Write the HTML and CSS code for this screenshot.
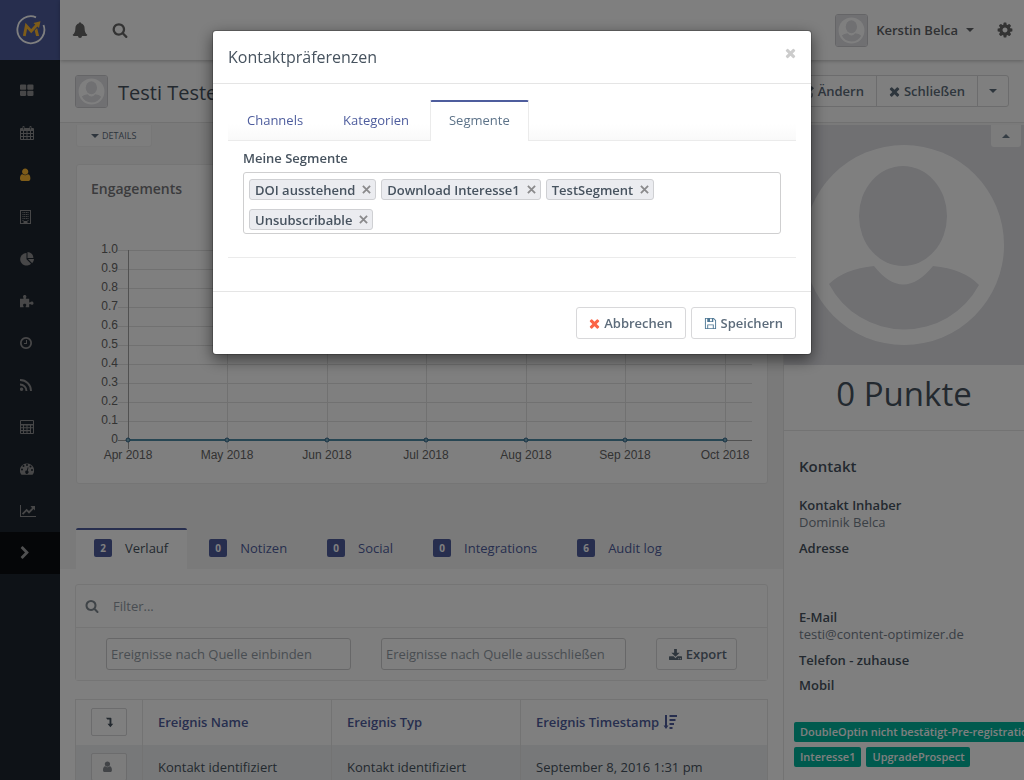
FILE: index.html
```
<!DOCTYPE html>
<html lang="de">
<head>
<meta charset="utf-8">
<meta name="viewport" content="width=device-width, initial-scale=1">
<title>Testi Tester – Kontaktpräferenzen</title>
<link rel="stylesheet" href="styles.css">
</head>
<body>
<svg class="sprite" aria-hidden="true">
  <symbol id="times" viewBox="200 200 1392 1392"><path d="M1490 1322q0 40-28 68l-136 136q-28 28-68 28t-68-28l-294-294-294 294q-28 28-68 28t-68-28l-136-136q-28-28-28-68t28-68l294-294-294-294q-28-28-28-68t28-68l136-136q28-28 68-28t68 28l294 294 294-294q28-28 68-28t68 28l136 136q28 28 28 68t-28 68l-294 294 294 294q28 28 28 68z"/></symbol>
  <symbol id="search" viewBox="0 0 1792 1792"><path d="M1216 832q0-185-131.5-316.5t-316.5-131.5-316.5 131.5-131.5 316.5 131.5 316.5 316.5 131.5 316.5-131.5 131.5-316.5zm512 832q0 52-38 90t-90 38q-54 0-90-38l-343-342q-179 124-399 124-143 0-273.5-55.5t-225-150-150-225-55.5-273.5 55.5-273.5 150-225 225-150 273.5-55.5 273.5 55.5 225 150 150 225 55.5 273.5q0 220-124 399l343 343q37 37 37 90z"/></symbol>
  <symbol id="bell" viewBox="0 0 16 16"><path d="M7 1.3a1 1 0 0 1 2 0C11.500 2 12.600 4 12.600 6.300c0 3.200 1 5.200 2.700 6.500 0 .7-.5 1.200-1.200 1.200H10a2 2 0 0 1-4 0H1.900C1.200 14 .7 13.500.7 12.800c1.700-1.300 2.700-3.300 2.700-6.500C3.400 4 4.500 2 7 1.300z"/></symbol>
  <symbol id="grid" viewBox="64 64 1728 1728"><path d="M832 1024v384q0 52-38 90t-90 38h-512q-52 0-90-38t-38-90v-384q0-52 38-90t90-38h512q52 0 90 38t38 90zm0-768v384q0 52-38 90t-90 38h-512q-52 0-90-38t-38-90v-384q0-52 38-90t90-38h512q52 0 90 38t38 90zm896 768v384q0 52-38 90t-90 38h-512q-52 0-90-38t-38-90v-384q0-52 38-90t90-38h512q52 0 90 38t38 90zm0-768v384q0 52-38 90t-90 38h-512q-52 0-90-38t-38-90v-384q0-52 38-90t90-38h512q52 0 90 38t38 90z"/></symbol>
  <symbol id="calendar" viewBox="0 0 14 14"><path fill-rule="evenodd" d="M1 2h1.500V.8Q2.500 0 3.500 0t1 .8V2h5V.8Q9.500 0 10.500 0t1 .8V2H13q1 0 1 1v10q0 1-1 1H1q-1 0-1-1V3q0-1 1-1zM1 5v2h2V5zm3 0v2h2.500V5zm3.500 0v2H10V5zM11 5v2h2V5zM1 8v2h2V8zm3 0v2h2.500V8zm3.500 0v2H10V8zM11 8v2h2V8zM1 11v2h2v-2zm3 0v2h2.500v-2zm3.500 0v2H10v-2zm3.500 0v2h2v-2zM3.200 1v2.500h.6V1zm7 0v2.500h.6V1z"/></symbol>
  <symbol id="user" viewBox="256 64 1728 1728"><path d="M1536 1399q0 109-62.500 187t-150.500 78h-854q-88 0-150.500-78t-62.500-187q0-85 8.500-160.500t31.500-152 58.500-131 94-89 134.500-34.500q131 128 313 128t313-128q76 0 134.500 34.500t94 89 58.500 131 31.500 152 8.500 160.500zm-256-887q0 159-112.500 271.500t-271.500 112.500-271.500-112.500-112.500-271.500 112.500-271.500 271.500-112.500 271.500 112.500 112.500 271.500z"/></symbol>
  <symbol id="building" viewBox="1.500 0 14 14"><path fill-rule="evenodd" d="M1.500 0h11v14h-11zM2.500 1v12H5v-2h4v2h2.500V1z"/><path d="M4 2h1v1H4zm1.700 0h1v1h-1zm1.700 0h1v1h-1zM9 2h1v1H9zM4 4h1v1H4zm1.700 0h1v1h-1zm1.700 0h1v1h-1zM9 4h1v1H9zM4 6h1v1H4zm1.700 0h1v1h-1zm1.700 0h1v1h-1zM9 6h1v1H9zM4 8h1v1H4zm1.700 0h1v1h-1zm1.700 0h1v1h-1zM9 8h1v1H9zM4 10h1v1H4zm5 0h1v1H9z"/></symbol>
  <symbol id="pie" viewBox="0 0 14 14"><path d="M6.500 1v6.300l4.500 4.400A6.300 6.300 0 1 1 6.500 1zM7.500 0A6 6 0 0 1 13.400 6H7.500zM8 7h6a6 6 0 0 1-1.800 4.200z"/></symbol>
  <symbol id="puzzle" viewBox="0 0 14 14"><path d="M0 4.700c1.500.2 3.300.3 3.600-.2.200-.5-.6-1-.6-2C3 1.500 3.800.9 4.700.9s1.700.6 1.700 1.600c0 1-.8 1.400-.6 2 .2.500 2 .4 3.400.2v3c0 .8.500 1 1 .6.400-.4.900-.7 1.600-.7 1 0 1.700.7 1.700 1.600 0 1-.7 1.600-1.700 1.600-.7 0-1.200-.4-1.600-.7-.5-.4-1-.1-1 .6v2.600H5.700c-.2-1 .6-1.300.6-2.200 0-.8-.6-1.400-1.600-1.400S3 10.300 3 11.100c0 .9.800 1.200.6 2.200H0z"/></symbol>
  <symbol id="clock" viewBox="128 0 1792 1792"><path d="M1024 544v448q0 14-9 23t-23 9h-320q-14 0-23-9t-9-23v-64q0-14 9-23t23-9h224v-352q0-14 9-23t23-9h64q14 0 23 9t9 23zm416 352q0-148-73-273t-198-198-273-73-273 73-198 198-73 273 73 273 198 198 273 73 273-73 198-198 73-273zm224 0q0 209-103 385.500t-279.500 279.500-385.500 103-385.500-103-279.500-279.500-103-385.500 103-385.500 279.500-279.500 385.500-103 385.500 103 279.500 279.500 103 385.500z"/></symbol>
  <symbol id="rss" viewBox="1.500 .5 13 13"><circle cx="3" cy="11" r="1.600"/><path d="M1.500 6.500a6 6 0 0 1 6 6M1.500 2.400a10 10 0 0 1 10.200 10.100" fill="none" stroke="currentColor" stroke-width="1.800"/></symbol>
  <symbol id="calculator" viewBox="0 0 14 14"><path fill-rule="evenodd" d="M1 0h12q1 0 1 1v12q0 1-1 1H1q-1 0-1-1V1q0-1 1-1zM1 1v3h12V1zM1 5.500v1.800h2V5.500zm3 0v1.800h2.500V5.500zm3.500 0v1.800H10V5.500zm3.500 0v1.800h2V5.500zM1 8.300v1.800h2V8.300zm3 0v1.800h2.500V8.300zm3.500 0v1.800H10V8.300zM1 11.200V13h2v-1.800zm3 0V13h2.500v-1.800zm3.500 0V13H10v-1.800zM11 8.300V13h2V8.300z"/></symbol>
  <symbol id="gauge" viewBox="0 0 14 14"><path fill-rule="evenodd" d="M7 1.500a7 7 0 0 1 6 10.800q-.2.400-.7.400H1.700q-.5 0-.7-.4A7 7 0 0 1 7 1.500zM3 7.500a1 1 0 1 0-2 0 1 1 0 0 0 2 0zM4.500 4a1 1 0 1 0-2 .0 1 1 0 0 0 2 0zM8 3a1 1 0 1 0-2 0 1 1 0 0 0 2 0zm3.500 1.500a1 1 0 1 0-2 0 1 1 0 0 0 2 0zM13 8a1 1 0 1 0-2 0 1 1 0 0 0 2 0zM7.700 5.200l-.9 3.300a1.600 1.600 0 1 0 1 .3l.7-3.300z"/></symbol>
  <symbol id="trend" viewBox="0 0 16 14"><path d="M0 1h1v11h15v1H0z"/><path d="M10.500 2H15v4.500l-1.400-1.400-4.600 4.600L6.600 7.300l-3.400 3.400-1.300-1.300 4.700-4.700L9 7.100l3-3z"/></symbol>
  <symbol id="chevron" viewBox="256 0 1792 1792"><path d="M1363 877l-742 742q-19 19-45 19t-45-19l-166-166q-19-19-19-45t19-45l531-531-531-531q-19-19-19-45t19-45l166-166q19-19 45-19t45 19l742 742q19 19 19 45t-19 45z"/></symbol>
  <symbol id="cog" viewBox="64 64 1664 1664"><path d="M1152 896q0-106-75-181t-181-75-181 75-75 181 75 181 181 75 181-75 75-181zm512-109v222q0 12-8 23t-20 13l-185 28q-19 54-39 91 35 50 107 138 10 12 10 25t-9 23q-27 37-99 108t-94 71q-12 0-26-9l-138-108q-44 23-91 38-16 136-29 186-7 28-36 28h-222q-14 0-24.500-8.500t-11.500-21.500l-28-184q-49-16-90-37l-141 107q-10 9-25 9-14 0-25-11-126-114-165-168-7-10-7-23 0-12 8-23 15-21 51-66.500t54-70.500q-27-50-41-99l-183-27q-13-2-21-12.500t-8-23.500v-222q0-12 8-23t19-13l186-28q14-46 39-92-40-57-107-138-10-12-10-24 0-10 9-23 26-36 98.500-107.500t94.500-71.500q13 0 26 10l138 107q44-23 91-38 16-136 29-186 7-28 36-28h222q14 0 24.500 8.500t11.500 21.500l28 184q49 16 90 37l142-107q9-9 24-9 13 0 25 10 129 119 165 170 7 8 7 22 0 12-8 23-15 21-51 66.500t-54 70.500q26 50 41 98l183 28q13 2 21 12.500t8 23.500z"/></symbol>
  <symbol id="edit" viewBox="0 0 14 14"><path d="M9 2H2.500Q1 2 1 3.500v8Q1 13 2.500 13h8q1.500 0 1.500-1.500V9" fill="none" stroke="currentColor" stroke-width="1.200"/><path d="M5 7.500L11.500 1 14 3.500 7.500 10H5z"/></symbol>
  <symbol id="save" viewBox="0 0 14 14"><path fill-rule="evenodd" d="M1 1h9.500L13 3.500V13H1zM2 2v10h1.500V8h7v4H12V4l-2-2v3.500H3.500V2zm4.500 0v2.500h2V2zM4.500 9v3h5V9z"/></symbol>
  <symbol id="download" viewBox="0 0 14 14"><path d="M5.500 1h3v4h3L7 9.500 2.500 5h3z"/><path fill-rule="evenodd" d="M.5 9H5l2 2 2-2h4.500q.5 0 .5.500v3q0 .5-.5.500H.5q-.5 0-.5-.5v-3Q0 9 .5 9zM10 11v1h1v-1zm2 0v1h1v-1z"/></symbol>
  <symbol id="level-down" viewBox="0 0 14 14"><path d="M3.500 2H9q.8 0 .8.800V9h2.200L8.600 13 5.200 9h2.400V4H5z"/></symbol>
  <symbol id="sort" viewBox="0 0 14 14"><path d="M2 0h2v10.500h1.500L3 14 .5 10.500H2zM6.500 0H14v2H6.500zm0 4h6v2h-6zm0 4H11v2H6.500zm0 4h3v2h-3z"/></symbol>
  <symbol id="avatar" viewBox="0 0 240 240"><path d="M0 0h240v240H0z" fill="#e0e0e5"/><circle cx="120" cy="120" r="100" fill="#fff"/><ellipse cx="119" cy="91" rx="44" ry="50" fill="#e0e0e5"/><path d="M45 159Q60 144 90 141Q119 178 149 141Q180 144 195 160A85 85 0 0 1 45 159z" fill="#e0e0e5"/></symbol>
</svg>

<div class="app">
  <nav class="sidebar" aria-label="Hauptmenü">
    <a class="logo" href="#" aria-label="Startseite">
      <svg viewBox="0 0 30 30"><path d="M20 2.300A13.500 13.500 0 1 0 27.500 10" fill="none" stroke="#fff" stroke-width="1.800"/><path d="M8.300 21L10.300 10.800l4.900 5.400 5.600-6.200" fill="none" stroke="#fdb933" stroke-width="2.800"/><path d="M17.500 8L24.500 6.200 23 13zM18.700 15.500l2.400-2.500 2 8h-3z" fill="#fdb933"/></svg>
    </a>
    <a class="side-link side-first" href="#" aria-label="Dashboard"><svg><use href="#grid"/></svg></a>
    <a class="side-link" href="#" aria-label="Kalender"><svg><use href="#calendar"/></svg></a>
    <a class="side-link active" href="#" aria-label="Kontakte"><svg><use href="#user"/></svg></a>
    <a class="side-link" href="#" aria-label="Unternehmen"><svg><use href="#building"/></svg></a>
    <a class="side-link" href="#" aria-label="Segmente"><svg><use href="#pie"/></svg></a>
    <a class="side-link" href="#" aria-label="Komponenten"><svg><use href="#puzzle"/></svg></a>
    <a class="side-link" href="#" aria-label="Kampagnen"><svg><use href="#clock"/></svg></a>
    <a class="side-link" href="#" aria-label="Kanäle"><svg><use href="#rss"/></svg></a>
    <a class="side-link" href="#" aria-label="Punkte"><svg><use href="#calculator"/></svg></a>
    <a class="side-link" href="#" aria-label="Phasen"><svg><use href="#gauge"/></svg></a>
    <a class="side-link" href="#" aria-label="Berichte"><svg class="wide"><use href="#trend"/></svg></a>
    <button class="side-link side-toggle" type="button" aria-label="Menü ausklappen"><svg><use href="#chevron"/></svg></button>
  </nav>

  <div class="page">
    <header class="topbar">
      <button class="icon-button" type="button" aria-label="Benachrichtigungen"><svg><use href="#bell"/></svg></button>
      <button class="icon-button" type="button" aria-label="Suche"><svg><use href="#search"/></svg></button>
      <a class="account" href="#"><svg class="avatar"><use href="#avatar"/></svg><span>Kerstin Belca</span><i class="caret"></i></a>
      <button class="icon-button" type="button" aria-label="Einstellungen"><svg><use href="#cog"/></svg></button>
    </header>

    <div class="page-head">
      <svg class="avatar"><use href="#avatar"/></svg>
      <h1>Testi Tester</h1>
      <div class="button-group">
        <button class="btn" type="button"><svg><use href="#edit"/></svg>Ändern</button>
        <button class="btn btn-times" type="button"><svg><use href="#times"/></svg>Schließen</button>
        <button class="btn btn-caret" type="button" aria-label="Weitere Aktionen"><i class="caret"></i></button>
      </div>
    </div>

    <div class="columns">
      <main class="main">
        <section class="overview">
          <button class="details" type="button"><i class="caret"></i>DETAILS</button>
          <div class="panel chart-panel">
            <h2>Engagements</h2>
            <svg class="chart" viewBox="0 0 662 228" role="img" aria-label="Engagements April bis Oktober 2018">
              <path class="grid-line" d="M27 10.500H661M27 29.500H661M27 48.500H661M27 67.500H661M27 86.500H661M27 105.500H661M27 124.500H661M27 143.500H661M27 162.500H661M27 181.500H661M136.500 10V209M236.500 10V209M335.500 10V209M435.500 10V209M534.500 10V209M634.500 10V209"/>
              <path class="axis-line" d="M37.500 10V209M27 200.500H661"/>
              <path class="data-line" d="M37 200H634"/>
              <g class="points"><circle cx="37" cy="200" r="2"/><circle cx="136" cy="200" r="2"/><circle cx="236" cy="200" r="2"/><circle cx="335" cy="200" r="2"/><circle cx="435" cy="200" r="2"/><circle cx="534" cy="200" r="2"/><circle cx="634" cy="200" r="2"/></g>
              <g class="y-labels"><text x="27" y="13">1.0</text><text x="27" y="32">0.9</text><text x="27" y="51">0.8</text><text x="27" y="70">0.7</text><text x="27" y="89">0.6</text><text x="27" y="108">0.5</text><text x="27" y="127">0.4</text><text x="27" y="146">0.3</text><text x="27" y="165">0.2</text><text x="27" y="184">0.1</text><text x="27" y="203">0</text></g>
              <g class="x-labels"><text x="37" y="219">Apr 2018</text><text x="136" y="219">May 2018</text><text x="236" y="219">Jun 2018</text><text x="335" y="219">Jul 2018</text><text x="435" y="219">Aug 2018</text><text x="534" y="219">Sep 2018</text><text x="634" y="219">Oct 2018</text></g>
            </svg>
          </div>
          <nav class="record-tabs" aria-label="Kontaktdaten">
            <a class="current" href="#"><span class="count">2</span>Verlauf</a>
            <a href="#"><span class="count">0</span>Notizen</a>
            <a href="#"><span class="count">0</span>Social</a>
            <a href="#"><span class="count">0</span>Integrations</a>
            <a href="#"><span class="count">6</span>Audit log</a>
          </nav>
        </section>

        <section class="history">
          <form class="panel filter">
            <div class="filter-search"><svg><use href="#search"/></svg><input type="text" placeholder="Filter..." aria-label="Filter"></div>
            <div class="filter-row">
              <input type="text" placeholder="Ereignisse nach Quelle einbinden" aria-label="Ereignisse nach Quelle einbinden">
              <input type="text" placeholder="Ereignisse nach Quelle ausschließen" aria-label="Ereignisse nach Quelle ausschließen">
              <button class="btn btn-export" type="button"><svg><use href="#download"/></svg>Export</button>
            </div>
          </form>
          <table class="events">
            <thead><tr>
              <th class="col-icon"><button class="mini" type="button" aria-label="Alle Details umschalten"><svg><use href="#level-down"/></svg></button></th>
              <th class="col-mid"><a href="#">Ereignis Name</a></th>
              <th class="col-mid"><a href="#">Ereignis Typ</a></th>
              <th><a href="#">Ereignis Timestamp <svg><use href="#sort"/></svg></a></th>
            </tr></thead>
            <tbody><tr>
              <td><button class="mini muted" type="button" aria-label="Details"><svg><use href="#user"/></svg></button></td>
              <td>Kontakt identifiziert</td><td>Kontakt identifiziert</td><td>September 8, 2016 1:31 pm</td>
            </tr></tbody>
          </table>
        </section>
      </main>

      <aside class="profile">
        <div class="portrait"><svg viewBox="0 0 240 240"><use href="#avatar"/></svg><button class="collapse" type="button" aria-label="Bild einklappen"><i class="caret caret-up"></i></button></div>
        <div class="points-total">0 Punkte</div>
        <div class="contact">
          <h3>Kontakt</h3>
          <dl>
            <dt>Kontakt Inhaber</dt><dd>Dominik Belca</dd>
            <dt>Adresse</dt><dd class="address"></dd>
            <dt>E-Mail</dt><dd>testi@content-optimizer.de</dd>
            <dt>Telefon - zuhause</dt><dd></dd>
            <dt>Mobil</dt><dd></dd>
          </dl>
        </div>
        <div class="tags"><span>DoubleOptin nicht bestätigt-Pre-registration</span><span>Interesse1</span><span>UpgradeProspect</span></div>
      </aside>
    </div>
  </div>
</div>

<div class="backdrop">
  <div class="modal" role="dialog" aria-modal="true" aria-labelledby="modal-title">
    <header class="modal-head">
      <h4 id="modal-title">Kontaktpräferenzen</h4>
      <button class="close" type="button" aria-label="Dialog ausblenden"><svg><use href="#times"/></svg></button>
    </header>
    <div class="modal-body">
      <nav class="modal-tabs" aria-label="Präferenzen">
        <a href="#">Channels</a><a href="#">Kategorien</a><a class="current" href="#">Segmente</a>
      </nav>
      <div class="field">
        <label for="segments">Meine Segmente</label>
        <div class="chips">
          <span class="chip">DOI ausstehend<button type="button" aria-label="DOI ausstehend entfernen"><svg viewBox="0 0 10 10"><path d="M1 1l8 8M9 1L1 9"/></svg></button></span>
          <span class="chip">Download Interesse1<button type="button" aria-label="Download Interesse1 entfernen"><svg viewBox="0 0 10 10"><path d="M1 1l8 8M9 1L1 9"/></svg></button></span>
          <span class="chip">TestSegment<button type="button" aria-label="TestSegment entfernen"><svg viewBox="0 0 10 10"><path d="M1 1l8 8M9 1L1 9"/></svg></button></span>
          <span class="chip">Unsubscribable<button type="button" aria-label="Unsubscribable entfernen"><svg viewBox="0 0 10 10"><path d="M1 1l8 8M9 1L1 9"/></svg></button></span>
          <input id="segments" type="text">
        </div>
      </div>
    </div>
    <footer class="modal-foot">
      <button class="btn btn-times cancel" type="button"><svg><use href="#times"/></svg>Abbrechen</button>
      <button class="btn save" type="button"><svg><use href="#save"/></svg>Speichern</button>
    </footer>
  </div>
</div>
</body>
</html>
```
FILE: styles.css
```
* { box-sizing: border-box; }
body {
  margin: 0;
  font: 13px/18px "Open Sans", "Noto Sans", sans-serif;
  color: #47535f;
  background: #fff;
  overflow: hidden;
}
h1, h2, h3, h4, dl, dd { margin: 0; }
a { color: #4e5d9d; text-decoration: none; }
button, input { font: inherit; color: inherit; }
button { padding: 0; border: 0; background: none; cursor: pointer; }
svg { width: 14px; height: 14px; fill: currentColor; flex: none; }
.sprite { position: absolute; width: 0; height: 0; }
.caret {
  display: inline-block;
  border: 4px solid transparent;
  border-top-color: currentColor;
  border-bottom: 0;
}
.caret-up { border-top: 0; border-bottom: 4px solid currentColor; }

.app { display: flex; height: 100vh; overflow: hidden; }
.sidebar { flex: none; width: 60px; background: #1d252e; color: #8e8e90; }
.logo {
  display: flex;
  align-items: center;
  justify-content: center;
  height: 60px;
  padding-left: 2px;
  background: #4e5d9d;
}
.logo svg { width: 30px; height: 30px; }
.side-link {
  display: flex;
  align-items: center;
  width: 100%;
  height: 42px;
  padding-left: 20px;
  color: inherit;
}
.side-link .wide { width: 16px; }
.side-link.active { color: #fdb933; }
.side-first { margin-top: 10px; }
.side-toggle { background: #0b0d10; color: #a0a0a2; }
.page { flex: 1; min-width: 0; display: flex; flex-direction: column; }

.topbar {
  position: relative;
  display: flex;
  align-items: center;
  height: 60px;
  padding: 0 11px 0 12px;
  color: #666;
  box-shadow: 0 1px 4px rgba(0, 0, 0, .25);
}
.icon-button { display: flex; width: 16px; margin-right: 24px; }
.icon-button svg { width: 16px; height: 16px; }
.icon-button:last-child { margin: 0 0 0 23px; }
.account { display: flex; align-items: center; gap: 8px; margin-left: auto; color: #606266; font-weight: 600; }
.avatar { width: 33px; height: 33px; border: 1px solid #cacace; border-radius: 3px; }
.page-head {
  display: flex;
  align-items: center;
  height: 63px;
  padding: 0 15px;
  background: #fdfdfd;
  border-bottom: 1px solid #e2e2e2;
}
.page-head h1 { margin-left: 10px; padding-top: 3px; font-size: 20px; line-height: 28px; font-weight: 400; }
.button-group { display: flex; margin-left: auto; }
.btn {
  display: flex;
  align-items: center;
  gap: 4px;
  height: 32px;
  padding: 0 12px;
  border: 1px solid #d8d8da;
  border-radius: 3px;
  background: #fff;
  color: #5d6c7b;
  font-weight: 600;
}
.btn svg { width: 13px; height: 13px; }
.btn-times svg { width: 11px; height: 11px; }
.btn-export { padding: 0 9px 0 12px; }
.button-group .btn { margin-left: -1px; border-radius: 0; }
.button-group .btn:last-child { border-radius: 0 3px 3px 0; }
.button-group .btn-caret { padding: 0 11px; }

.columns {
  flex: 1;
  min-height: 0;
  display: grid;
  grid-template-columns: minmax(0, 1fr) 240px;
  border-top: 2px solid #f5f5f5;
}
.main { min-width: 0; border-right: 1px solid #e6e6e6; }
.overview { padding: 0 15px 0 16px; background: #f5f5f5; }
.details {
  display: flex;
  align-items: center;
  gap: 3px;
  height: 22px;
  padding: 0 15px 0 14px;
  border: 1px solid #eee;
  border-top: 0;
  border-radius: 0 0 3px 3px;
  background: #fafafa;
  font-size: 9px;
  color: #5c6b7a;
}
.panel { border: 1px solid #ebebeb; border-radius: 3px; background: #fff; }
.chart-panel { margin-top: 17px; padding: 14px; height: 320px; }
.chart-panel h2 { font-size: 14px; line-height: 20px; font-weight: 600; color: #77777a; }
.chart { display: block; width: 100%; height: auto; margin-top: 41px; }
.chart text { font: 12px "Liberation Sans", Arial, sans-serif; fill: #666; }
.y-labels { text-anchor: end; }
.x-labels { text-anchor: middle; }
.grid-line { stroke: #e2e2e2; fill: none; }
.axis-line { stroke: #a2a2a2; fill: none; }
.data-line { stroke: #4e8ca6; stroke-width: 2; fill: none; }
.points { fill: #7fb0c5; stroke: #35688a; stroke-width: 1; }
.record-tabs { display: flex; margin-top: 44px; }
.record-tabs a {
  display: flex;
  align-items: center;
  gap: 13px;
  height: 41px;
  padding: 0 18px 3px;
  border-top: 2px solid transparent;
}
.record-tabs a + a { padding-left: 22px; }
.record-tabs .current { padding-right: 19px; border-top-color: #4e5d9d; border-radius: 2px 2px 0 0; background: #fff; color: #47535f; }
.count {
  width: 18px;
  border-radius: 2px;
  background: #4e5d9d;
  color: #fff;
  font-size: 10px;
  font-weight: 700;
  text-align: center;
}
.history { padding: 15px 15px 0; }
input::placeholder { color: #929ba4; opacity: 1; }
.filter-search { display: flex; align-items: center; gap: 14px; height: 43px; padding: 0 9px; border-bottom: 1px solid #ebebeb; }
.filter-search svg { color: #7f8890; }
.filter-search input { flex: 1; padding: 0; border: 0; background: none; }
.filter-row { display: flex; gap: 30px; padding: 10px 30px; background: #fdfdfd; }
.filter-row input { flex: 1; min-width: 0; height: 32px; padding: 0 4px; border: 1px solid #cfcfd0; border-radius: 3px; background: #fff; }
.events { width: 100%; margin-top: 18px; border-collapse: collapse; table-layout: fixed; border: 1px solid #e6e6e6; }
.events th, .events td { height: 45px; padding: 0 15px; border-left: 1px solid #e6e6e6; text-align: left; }
.events th { font-weight: 600; }
.events th svg { vertical-align: -2px; }
.events .col-icon { width: 67px; }
.events .col-mid { width: 189px; }
.events tbody { background: #eef0f2; }
.mini { display: flex; align-items: center; justify-content: center; width: 36px; height: 28px; border: 1px solid #d8d8da; border-radius: 2px; background: #fff; }
.mini svg { width: 12px; height: 12px; }
.muted { color: #84898e; background: #f8f8f9; }

.profile { min-width: 0; overflow: hidden; }
.portrait { position: relative; }
.portrait > svg { display: block; width: 100%; height: auto; }
.collapse {
  position: absolute;
  top: 0;
  right: 3px;
  display: flex;
  align-items: center;
  justify-content: center;
  width: 30px;
  height: 22px;
  background: #f8f8f8;
  color: #6b7a88;
  border-radius: 0 0 3px 3px;
}
.points-total { padding: 5px 0 12px; border-bottom: 1px solid #e6e6e6; font-size: 33px; line-height: 48px; text-align: center; }
.contact { padding: 25px 15px 0; }
.contact h3 { margin-bottom: 21px; font-size: 15px; line-height: 20px; font-weight: 600; }
.contact dl { line-height: 17px; }
.contact dt { font-weight: 600; }
.contact dd { margin-bottom: 8px; color: #75808b; }
.contact dd:not(:empty) { margin-bottom: 9px; }
.contact .address { height: 44px; }
.tags { display: flex; flex-wrap: wrap; gap: 5px; padding: 20px 0 0 10px; }
.tags span { padding: 1px 6px; border-radius: 2px; background: #00b49c; color: #fff; font-size: 11px; font-weight: 600; white-space: nowrap; }

.backdrop { position: fixed; inset: 0; padding: 30px 15px; background: rgba(0, 0, 0, .5); overflow: auto; }
.modal {
  max-width: 600px;
  margin: 0 auto;
  border: 1px solid rgba(0, 0, 0, .2);
  border-radius: 4px;
  background: #fff;
  background-clip: padding-box;
  box-shadow: 0 5px 15px rgba(0, 0, 0, .5);
}
.modal-head { display: flex; justify-content: space-between; padding: 15px; border-bottom: 1px solid #e5e5e5; }
.modal-head h4 { font-size: 16px; line-height: 22px; font-weight: 400; }
.close { display: flex; height: 14px; color: #ccc; }
.close svg { width: 11px; height: 14px; }
.modal-body { padding: 16px 15px 33px; }
.modal-tabs { display: flex; border-bottom: 1px solid #ebebeb; background: linear-gradient(#fff 60%, #f9f9f9); }
.modal-tabs a { height: 40px; padding: 11px 21px 0 19px; }
.modal-tabs .current {
  height: 41px;
  margin-bottom: -1px;
  padding: 9px 18px 0;
  border: 1px solid #ebebeb;
  border-top: 2px solid #4e5d9d;
  border-bottom: 0;
  border-radius: 2px 2px 0 0;
  background: #fff;
  color: #5d7389;
}
.field { padding: 8px 15px 23px; border-bottom: 1px solid #ebebeb; }
.field label { display: block; margin-bottom: 5px; font-weight: 600; }
.chips { display: flex; flex-wrap: wrap; gap: 9px 5px; padding: 6px 5px 3px; border: 1px solid #cfcfd0; border-radius: 3px; }
.chip { display: flex; align-items: center; gap: 7px; height: 21px; padding: 0 4px 0 5px; border: 1px solid #cfd0d3; border-radius: 3px; background: #ebecf0; font-weight: 600; }
.chip button { display: flex; }
.chip svg { width: 9px; height: 9px; stroke: #8a8a8c; stroke-width: 2; }
.chips input { flex: 1; min-width: 25px; height: 21px; padding: 0; border: 0; outline: 0; background: none; }
.modal-foot { display: flex; justify-content: flex-end; gap: 5px; padding: 15px; border-top: 1px solid #e5e5e5; }
.cancel svg { color: #fb6447; }
.save svg { color: #4e7794; }
```
